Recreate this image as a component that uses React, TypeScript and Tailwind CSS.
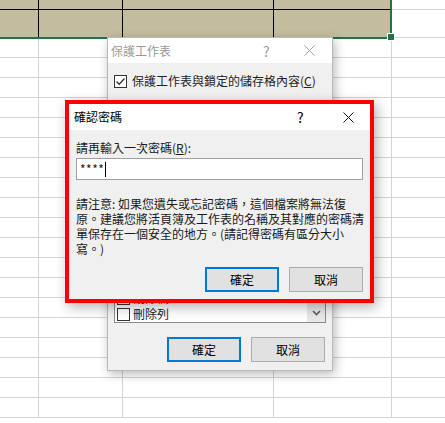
const FONT = { fontFamily: '"Noto Sans CJK TC", "Noto Sans", sans-serif' };

function CloseIcon({ color }: { color: string }) {
  return (
    <svg width="11" height="11" viewBox="0 0 11 11">
      <path d="M0.5 0.5 L10.5 10.5 M10.5 0.5 L0.5 10.5" stroke={color} strokeWidth="1" fill="none" />
    </svg>
  );
}

function CheckBox({ checked }: { checked?: boolean }) {
  return (
    <div className="w-[13px] h-[13px] border border-[#333] bg-white flex items-center justify-center shrink-0">
      {checked && (
        <svg width="11" height="11" viewBox="0 0 11 11">
          <path d="M1.5 5.5 L4.2 8.2 L9.5 2.5" stroke="#333" strokeWidth="1.3" fill="none" />
        </svg>
      )}
    </div>
  );
}

/* spreadsheet grid behind the dialogs */
function Sheet() {
  const rows = Array.from({ length: 19 });
  return (
    <div className="w-[445px] h-[423px] bg-white">
      <div className="flex">
        <div className="w-[392px] h-[39px] bg-[#c4bc9e] border-r-2 border-b-2 border-[#217346]">
          <div className="flex h-[10px] border-b border-black">
            <div className="w-[39px] border-r border-black" />
            <div className="w-[84px] border-r border-black" />
            <div className="w-[151px] border-r border-black" />
            <div className="flex-1" />
          </div>
          <div className="flex h-[27px]">
            <div className="w-[39px] border-r border-black" />
            <div className="w-[84px] border-r border-black" />
            <div className="w-[151px] border-r border-black" />
            <div className="flex-1" />
          </div>
        </div>
        <div className="flex-1">
          <div className="h-[10px] border-b border-[#d4d4d4]" />
          <div className="h-[28px] border-b border-[#d4d4d4]" />
        </div>
      </div>
      {rows.map((_, i) => (
        <div
          key={i}
          className={`flex border-b border-[#d4d4d4] ${i === 0 ? "h-[19px]" : "h-[20px]"}`}
        >
          <div className="w-[39px] border-r border-[#d4d4d4]" />
          <div className="w-[84px] border-r border-[#d4d4d4]" />
          <div className="w-[151px] border-r border-[#d4d4d4]" />
          <div className="w-[118px] border-r border-[#d4d4d4]" />
          <div className="flex-1" />
        </div>
      ))}
    </div>
  );
}

function ProtectSheetDialog() {
  return (
    <div className="absolute left-[107px] top-[37px] w-[226px] h-[334px] border border-[#b9b9b9] bg-[#f0f0f0] flex flex-col shadow-[2px_3px_10px_rgba(0,0,0,0.28)]">
      <div className="h-[25px] bg-white flex items-center pl-[3px] text-[12px] text-[#9a9a9a]">
        <span className="flex-1 leading-none">保護工作表</span>
        <span className="w-[29px] text-[14px] text-[#9a9a9a] leading-none">?</span>
        <span className="w-[40px] flex justify-center pr-[6px]">
          <CloseIcon color="#a0a0a0" />
        </span>
      </div>
      <div className="flex-1 flex flex-col px-[6px] pt-[11px] pb-[8px]">
        <div className="flex items-center gap-[5px] text-[12px] text-[#222] leading-[14px]">
          <CheckBox checked />
          <span className="whitespace-nowrap">
            保護工作表與鎖定的儲存格內容(<span className="underline">C</span>)
          </span>
        </div>
        <div className="mt-[14px] flex-1 bg-white border border-[#8a8a8a] flex">
          <div className="flex-1 flex flex-col justify-end pl-[2px] pb-[1px] gap-[2px] text-[12px] text-[#222] leading-[14px]">
            <div className="flex items-center gap-[3px]">
              <CheckBox />
              <span>刪除欄</span>
            </div>
            <div className="flex items-center gap-[3px]">
              <CheckBox />
              <span>刪除列</span>
            </div>
          </div>
          <div className="w-[18px] bg-[#e8e8e8] flex flex-col justify-end items-center pb-[6px]">
            <svg width="9" height="6" viewBox="0 0 9 6">
              <path d="M1 1 L4.5 4.5 L8 1" stroke="#606060" strokeWidth="1.6" fill="none" />
            </svg>
          </div>
        </div>
        <div className="mt-[14px] flex justify-end gap-[10px] pr-[1px] text-[12px] text-black">
          <button className="w-[74px] h-[25px] bg-[#e1e1e1] border-2 border-[#0078d7] leading-none">確定</button>
          <button className="w-[74px] h-[25px] bg-[#e1e1e1] border border-[#adadad] leading-none">取消</button>
        </div>
      </div>
    </div>
  );
}

function ConfirmPasswordDialog() {
  return (
    <div className="absolute left-[65px] top-[100px] w-[309px] h-[203px] border-4 border-[#ff0000] bg-[#f0f0f0] flex flex-col shadow-[3px_4px_12px_rgba(0,0,0,0.3)]">
      <div className="h-[26px] bg-white flex items-center pl-[5px] text-[12px] text-black">
        <span className="flex-1 leading-none">確認密碼</span>
        <span className="w-[33px] text-[14px] leading-none">?</span>
        <span className="w-[40px] flex justify-center pr-[4px]">
          <CloseIcon color="#111" />
        </span>
      </div>
      <div className="flex-1 flex flex-col px-[7px] pt-[10px] text-[12px] text-[#1a1a1a]">
        <div className="leading-[15px]">
          請再輸入一次密碼(<span className="underline">R</span>):
        </div>
        <div className="mt-[3px] h-[22px] bg-white border border-[#a0a0a0] flex items-center pl-[3px]">
          <span className="text-[12px] leading-none tracking-[0.5px]">****</span>
          <span className="w-px h-[15px] bg-black ml-px" />
        </div>
        <div className="mt-[16px] leading-[15px] whitespace-nowrap">
          <div>請注意: 如果您遺失或忘記密碼，這個檔案將無法復</div>
          <div>原。建議您將活頁簿及工作表的名稱及其對應的密碼清</div>
          <div>單保存在一個安全的地方。(請記得密碼有區分大小</div>
          <div>寫。)</div>
        </div>
        <div className="mt-[11px] flex justify-end gap-[10px] text-black">
          <button className="w-[74px] h-[25px] bg-[#e1e1e1] border-2 border-[#0078d7] leading-none">確定</button>
          <button className="w-[74px] h-[25px] bg-[#e1e1e1] border border-[#adadad] leading-none">取消</button>
        </div>
      </div>
    </div>
  );
}

export default function App() {
  return (
    <div className="relative w-[445px] h-[423px] overflow-hidden" style={FONT}>
      <Sheet />
      {/* fill handle of the selection */}
      <div className="absolute left-[388px] top-[34px] w-[6px] h-[6px] bg-[#217346] outline outline-1 outline-white" />
      <ProtectSheetDialog />
      <ConfirmPasswordDialog />
    </div>
  );
}
